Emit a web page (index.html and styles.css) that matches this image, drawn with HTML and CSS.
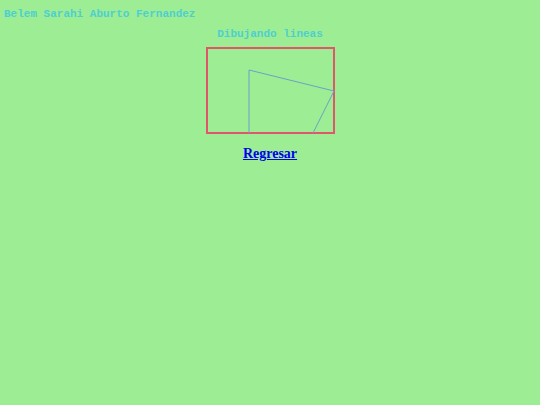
FILE: index.html
```html
<!DOCTYPE html>
<html>
<head>
<meta charset="utf-8">
<link rel="stylesheet" href="styles.css">
</head>
<body>
<div class="author">Belem Sarahi Aburto Fernandez</div>
<div class="title">Dibujando lineas</div>
<div class="stage">
<svg class="canvas" width="129" height="87" viewBox="0 0 129 87">
<rect x="1" y="1" width="127" height="85" fill="none" stroke="#e0566a" stroke-width="2"/>
<polyline points="43,86 43,23 128,44 107,86" fill="none" stroke="#6f9fc8" stroke-width="1"/>
</svg>
</div>
<div class="back"><a href="#">Regresar</a></div>
</body>
</html>
```
FILE: styles.css
```css
html, body { margin: 0; padding: 0; }
body {
  background: #9ced94;
  width: 540px;
  height: 405px;
  overflow: hidden;
}
.author {
  font-family: "Liberation Mono", monospace;
  font-weight: bold;
  font-size: 11px;
  color: #4fcfcf;
  padding: 8px 0 0 4px;
  line-height: 13px;
}
.title {
  font-family: "Liberation Mono", monospace;
  font-weight: bold;
  font-size: 11px;
  color: #4fcfcf;
  text-align: center;
  line-height: 13px;
  margin-top: 7px;
}
.stage {
  display: flex;
  justify-content: center;
  margin-top: 6px;
}
.canvas { display: block; }
.back {
  text-align: center;
  margin-top: 12px;
  font-family: "Liberation Serif", serif;
  font-weight: bold;
  font-size: 14px;
  line-height: 16px;
}
.back a { color: #0000ee; }
```
